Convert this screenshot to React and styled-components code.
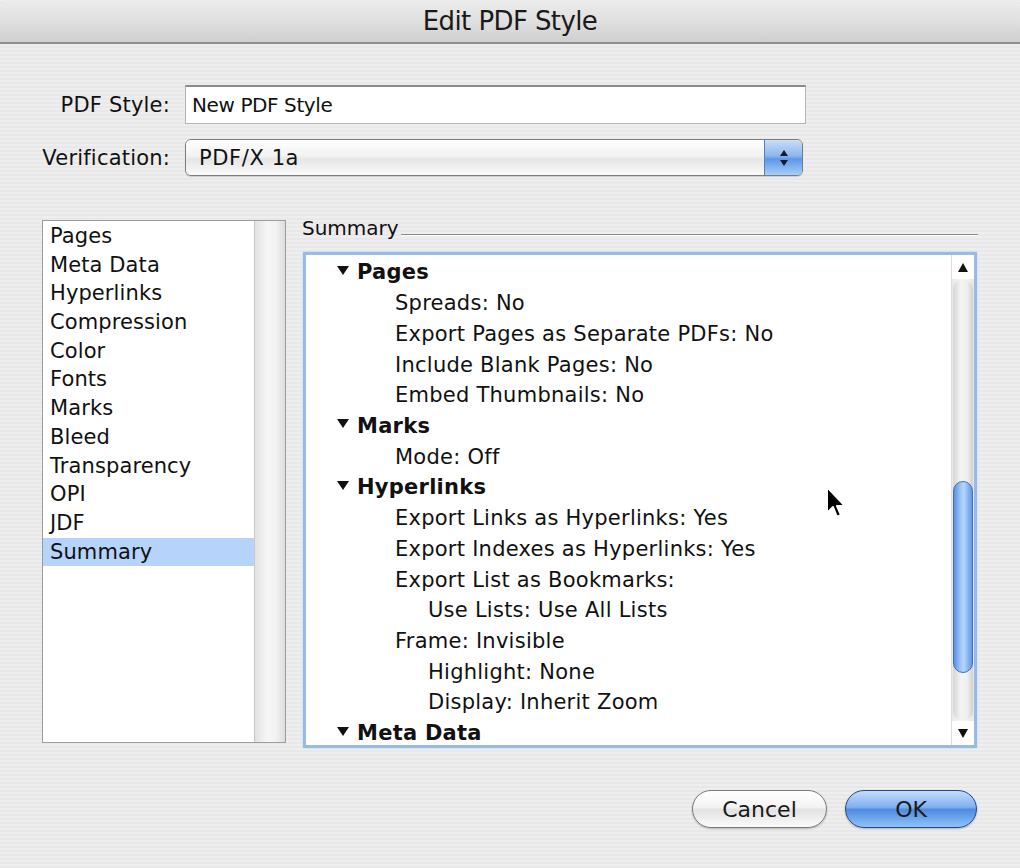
import React from 'react';
import styled, { createGlobalStyle } from 'styled-components';

const GlobalStyle = createGlobalStyle`
  html, body {
    margin: 0;
    padding: 0;
  }
  body {
    font-family: "DejaVu Sans", "Liberation Sans", sans-serif;
    color: #111;
  }
`;

const categories = [
  'Pages', 'Meta Data', 'Hyperlinks', 'Compression', 'Color', 'Fonts',
  'Marks', 'Bleed', 'Transparency', 'OPI', 'JDF', 'Summary',
];

const summary = [
  { level: 0, text: 'Pages' },
  { level: 1, text: 'Spreads: No' },
  { level: 1, text: 'Export Pages as Separate PDFs: No' },
  { level: 1, text: 'Include Blank Pages: No' },
  { level: 1, text: 'Embed Thumbnails: No' },
  { level: 0, text: 'Marks' },
  { level: 1, text: 'Mode: Off' },
  { level: 0, text: 'Hyperlinks' },
  { level: 1, text: 'Export Links as Hyperlinks: Yes' },
  { level: 1, text: 'Export Indexes as Hyperlinks: Yes' },
  { level: 1, text: 'Export List as Bookmarks:' },
  { level: 2, text: 'Use Lists: Use All Lists' },
  { level: 1, text: 'Frame: Invisible' },
  { level: 2, text: 'Highlight: None' },
  { level: 2, text: 'Display: Inherit Zoom' },
  { level: 0, text: 'Meta Data' },
];

function App() {
  return (
    <Window>
      <GlobalStyle />
      <TitleBar>Edit PDF Style</TitleBar>
      <Content>
        <Form>
          <Label>PDF Style:</Label>
          <TextField>New PDF Style</TextField>
          <Label>Verification:</Label>
          <Popup>
            <PopupText>PDF/X 1a</PopupText>
            <Stepper>
              <svg width="10" height="18" viewBox="0 0 10 18">
                <path d="M5 1 L9 7 L1 7 Z" fill="#1a1a2a" />
                <path d="M5 17 L9 11 L1 11 Z" fill="#1a1a2a" />
              </svg>
            </Stepper>
          </Popup>
        </Form>

        <Panes>
          <ListBox>
            <List>
              {categories.map((c) => (
                <ListItem key={c} selected={c === 'Summary'}>{c}</ListItem>
              ))}
            </List>
            <ListTrack />
          </ListBox>

          <SummarySection>
            <GroupHeader>
              <span>Summary</span>
              <HeaderRule />
            </GroupHeader>
            <SummaryBox>
              <Tree>
                {summary.map((r, i) => (
                  <TreeRow key={i} level={r.level}>
                    {r.level === 0 && (
                      <Disclosure viewBox="0 0 12 10" width="12" height="10">
                        <path d="M0 0 L12 0 L6 9 Z" fill="#111" />
                      </Disclosure>
                    )}
                    {r.text}
                  </TreeRow>
                ))}
              </Tree>
              <ScrollBar>
                <ArrowBox>
                  <svg width="10" height="9" viewBox="0 0 10 9">
                    <path d="M5 0 L10 9 L0 9 Z" fill="#111" />
                  </svg>
                </ArrowBox>
                <Track>
                  <TrackSpace grow={200} />
                  <Thumb />
                  <TrackSpace grow={48} />
                </Track>
                <ArrowBox>
                  <svg width="10" height="9" viewBox="0 0 10 9">
                    <path d="M0 0 L10 0 L5 9 Z" fill="#111" />
                  </svg>
                </ArrowBox>
              </ScrollBar>
            </SummaryBox>
          </SummarySection>
        </Panes>

        <Buttons>
          <PillButton>Cancel</PillButton>
          <PillButton primary>OK</PillButton>
        </Buttons>
      </Content>

      <Cursor width="24" height="36" viewBox="0 0 24 36">
        <path
          d="M2 2 L2 28 L8 22 L12 32 L16 30 L12 21 L20 21 Z"
          fill="#000"
          stroke="#fff"
          strokeWidth="2"
          strokeLinejoin="round"
        />
      </Cursor>
    </Window>
  );
}

export default App;

const Window = styled.div`
  position: relative;
  width: 1020px;
  height: 868px;
  overflow: hidden;
  background-color: #ececec;
  background-image: repeating-linear-gradient(
    to bottom,
    #eeeeee 0px,
    #eeeeee 2px,
    #e8e8e8 2px,
    #e8e8e8 4px
  );
  display: flex;
  flex-direction: column;
`;

const TitleBar = styled.div`
  height: 42px;
  flex-shrink: 0;
  border-bottom: 2px solid #8e8e8e;
  border-radius: 10px 10px 0 0;
  background: linear-gradient(to bottom, #ececec 0%, #e0e0e0 50%, #cfcfcf 100%);
  display: flex;
  align-items: center;
  justify-content: center;
  font-size: 26px;
  letter-spacing: -0.6px;
  color: #1a1a1a;
`;

const Content = styled.div`
  flex: 1;
  display: flex;
  flex-direction: column;
  padding: 41px 42px 0 42px;
`;

const Form = styled.div`
  display: grid;
  grid-template-columns: 128px 621px;
  grid-template-rows: 39px 37px;
  column-gap: 15px;
  row-gap: 15px;
  align-items: center;
`;

const Label = styled.div`
  text-align: right;
  font-size: 21px;
  letter-spacing: 0.2px;
  color: #111;
  white-space: nowrap;
`;

const TextField = styled.div`
  height: 39px;
  box-sizing: border-box;
  background: #fff;
  border: 1px solid #b4b4b4;
  border-top: 2px solid #8a8a8a;
  padding: 0 6px;
  display: flex;
  align-items: center;
  font-size: 20px;
  letter-spacing: -0.4px;
  color: #111;
`;

const Popup = styled.div`
  width: 618px;
  height: 37px;
  box-sizing: border-box;
  display: flex;
  border: 1px solid #7c7c7c;
  border-radius: 6px;
  overflow: hidden;
  box-shadow: 0 1px 1px rgba(0, 0, 0, 0.15);
`;

const PopupText = styled.div`
  flex: 1;
  display: flex;
  align-items: center;
  padding-left: 13px;
  font-size: 21px;
  letter-spacing: 0.6px;
  background: linear-gradient(to bottom, #ffffff 0%, #f2f2f2 45%, #e6e6e6 55%, #fafafa 100%);
`;

const Stepper = styled.div`
  width: 37px;
  display: flex;
  align-items: center;
  justify-content: center;
  border-left: 1px solid #5a7fb5;
  background: linear-gradient(to bottom, #c9def8 0%, #8cb6ee 45%, #5d97e6 55%, #a6d0fb 100%);
`;

const Panes = styled.div`
  display: flex;
  margin-top: 44px;
  gap: 16px;
`;

const ListBox = styled.div`
  width: 244px;
  height: 523px;
  box-sizing: border-box;
  border: 1px solid #9c9c9c;
  display: flex;
  background: #fff;
`;

const List = styled.div`
  flex: 1;
  padding-top: 1px;
  display: flex;
  flex-direction: column;
`;

const ListItem = styled.div`
  height: 28.7px;
  line-height: 28.7px;
  padding-left: 7px;
  font-size: 21px;
  letter-spacing: 0.1px;
  color: #111;
  background: ${(p) => (p.selected ? '#b5d3fb' : 'transparent')};
`;

const ListTrack = styled.div`
  width: 30px;
  border-left: 1px solid #c8c8c8;
  background: linear-gradient(to right, #e2e2e2 0%, #f6f6f6 40%, #f2f2f2 70%, #dcdcdc 100%);
`;

const SummarySection = styled.div`
  flex: 1;
  display: flex;
  flex-direction: column;
`;

const GroupHeader = styled.div`
  display: flex;
  align-items: flex-start;
  height: 32px;
  margin-top: -4px;
  font-size: 20px;
  color: #111;
  span {
    line-height: 24px;
  }
`;

const HeaderRule = styled.div`
  flex: 1;
  height: 0;
  border-top: 1px solid #8a8a8a;
  border-bottom: 1px solid #fafafa;
  margin-top: 18px;
  margin-left: 2px;
`;

const SummaryBox = styled.div`
  margin-left: 1px;
  margin-top: 4px;
  width: 674px;
  height: 496px;
  box-sizing: border-box;
  border: 3px solid #98bbe6;
  box-shadow: 0 0 2px #b6d0f0;
  background: #fff;
  display: flex;
`;

const Tree = styled.div`
  flex: 1;
  display: flex;
  flex-direction: column;
  overflow: hidden;
  padding-top: 2px;
`;

const TreeRow = styled.div`
  height: 30.73px;
  display: flex;
  align-items: center;
  flex-shrink: 0;
  font-size: 21px;
  letter-spacing: 0.25px;
  color: #111;
  white-space: nowrap;
  font-weight: ${(p) => (p.level === 0 ? 700 : 400)};
  padding-left: ${(p) => [31, 89, 122][p.level]}px;
`;

const Disclosure = styled.svg`
  margin-right: 8px;
  margin-top: -3px;
`;

const ScrollBar = styled.div`
  width: 22px;
  display: flex;
  flex-direction: column;
  border-left: 1px solid #dcdcdc;
  background: linear-gradient(to right, #e8e8e8 0%, #ffffff 50%, #e6e6e6 100%);
`;

const ArrowBox = styled.div`
  height: 24px;
  display: flex;
  align-items: center;
  justify-content: center;
  background: #fff;
`;

const Track = styled.div`
  flex: 1;
  display: flex;
  flex-direction: column;
  margin: 0 1px;
  border-radius: 11px;
  background: linear-gradient(to right, #d6d6d6 0%, #f4f4f4 40%, #f0f0f0 70%, #d0d0d0 100%);
`;

const TrackSpace = styled.div`
  flex: ${(p) => p.grow};
`;

const Thumb = styled.div`
  height: 190px;
  border-radius: 10px;
  border: 1px solid #3f6fc0;
  background: linear-gradient(to right, #5a8fe0 0%, #9cc4f6 35%, #b6d6fb 55%, #5f97e6 100%);
`;

const Buttons = styled.div`
  display: flex;
  justify-content: flex-end;
  gap: 18px;
  margin-top: 42px;
  padding-right: 1px;
`;

const PillButton = styled.div`
  width: ${(p) => (p.primary ? 132 : 135)}px;
  height: 38px;
  box-sizing: border-box;
  border-radius: 19px;
  display: flex;
  align-items: center;
  justify-content: center;
  font-size: 22px;
  color: #1a1a1a;
  border: 1px solid ${(p) => (p.primary ? '#27458a' : '#7a7a7a')};
  box-shadow: 0 1px 2px rgba(0, 0, 0, 0.25);
  background: ${(p) =>
    p.primary
      ? 'linear-gradient(to bottom, #c4dcfb 0%, #7fb1ef 45%, #4f8ae0 52%, #8ec4fa 100%)'
      : 'linear-gradient(to bottom, #ffffff 0%, #f3f3f3 45%, #e2e2e2 52%, #fbfbfb 100%)'};
`;

const Cursor = styled.svg`
  position: absolute;
  left: 825px;
  top: 485px;
`;
